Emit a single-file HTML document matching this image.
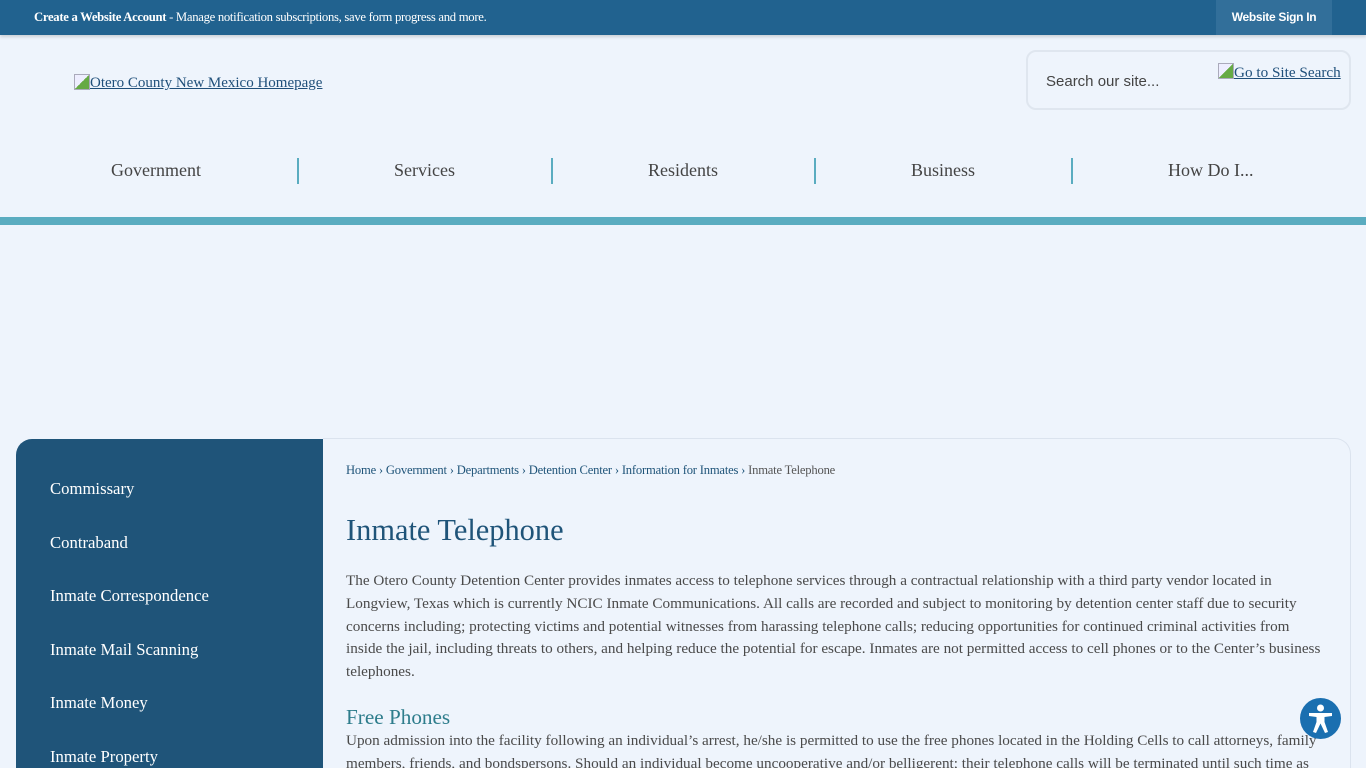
<!DOCTYPE html>
<html><head><style>
*{margin:0;padding:0;box-sizing:border-box}
html{overflow:hidden;height:768px}
body{width:1366px;height:768px;overflow:hidden;background:#eef4fc;font-family:"Liberation Serif",serif;position:relative}
.top{position:absolute;left:0;top:0;width:1366px;height:35px;background:#21628f;box-shadow:0 2px 3px rgba(0,0,0,.15)}
.top .t{position:absolute;left:34px;top:10px;font-size:12.7px;color:#fff;letter-spacing:-.3px}
.top .s{position:absolute;left:1216px;top:0;width:116px;height:35px;background:#326f9a;color:#fff;font-family:"Liberation Sans",sans-serif;font-weight:bold;font-size:12px;text-align:center;line-height:35px;letter-spacing:-.3px}
.logo{position:absolute;left:90px;top:75px;font-size:15px;color:#1f4f7a;text-decoration:underline}
.ic{position:absolute;width:16px;height:16px;border:1px solid #aab;background:linear-gradient(135deg,#eef 50%,#6a4 50%)}
.search{position:absolute;left:1026px;top:50px;width:325px;height:60px;border:2px solid #dfe6ef;border-radius:10px;background:#eef4fc}
.search .p{position:absolute;left:18px;top:21px;font-family:"Liberation Sans",sans-serif;font-size:15px;color:#444}
.search .g{position:absolute;left:206px;top:12px;font-size:15.2px;color:#1f4f7a;text-decoration:underline}
.nav{position:absolute;top:160px;font-size:18px;color:#444}
.sep{position:absolute;top:158px;width:2px;height:26px;background:#5aacc0}
.teal{position:absolute;left:0;top:217px;width:1366px;height:8px;background:#5aacc0}
.side{position:absolute;left:16px;top:439px;width:307px;height:329px;background:#1f5479;border-top-left-radius:16px;overflow:hidden}
.side div{position:absolute;left:34px;font-size:16.7px;color:#fff}
.main{position:absolute;left:323px;top:438px;width:1028px;height:340px;border:1px solid #dbe3ee;border-left:none;border-top-right-radius:16px}
.bc{position:absolute;left:346px;top:463px;font-size:12.6px;color:#1f5479;letter-spacing:-.2px}
.bc span{color:#555}
h1{position:absolute;left:346px;top:513px;font-weight:normal;font-size:30.4px;color:#1f5479}
.p1{position:absolute;left:346px;top:570px;width:978px;font-size:15.2px;line-height:22.8px;color:#4a4a4a}
h2{position:absolute;left:346px;top:705px;font-weight:normal;font-size:21.2px;color:#2e7d8c}
.p2{position:absolute;left:346px;top:730px;width:985px;font-size:15.2px;line-height:22.8px;color:#4a4a4a}
.acc{position:absolute;left:1300px;top:698px;width:41px;height:41px;border-radius:50%;background:#1a6fb0}
</style></head><body>
<div class="top"><div class="t"><b>Create a Website Account</b> - Manage notification subscriptions, save form progress and more.</div><div class="s">Website Sign In</div></div>
<div class="ic" style="left:74px;top:74px"></div>
<div class="logo">Otero County New Mexico Homepage</div>
<div class="search"><div class="p">Search our site...</div><div class="ic" style="left:190px;top:11px"></div><div class="g">Go to Site Search</div></div>
<div class="nav" style="left:111px">Government</div>
<div class="sep" style="left:297px"></div>
<div class="nav" style="left:394px">Services</div>
<div class="sep" style="left:551px"></div>
<div class="nav" style="left:648px">Residents</div>
<div class="sep" style="left:814px"></div>
<div class="nav" style="left:911px">Business</div>
<div class="sep" style="left:1071px"></div>
<div class="nav" style="left:1168px">How Do I...</div>
<div class="teal"></div>
<div class="side">
<div style="top:40px">Commissary</div>
<div style="top:94px">Contraband</div>
<div style="top:147px">Inmate Correspondence</div>
<div style="top:201px">Inmate Mail Scanning</div>
<div style="top:254px">Inmate Money</div>
<div style="top:308px">Inmate Property</div>
</div>
<div class="main"></div>
<div class="bc">Home › Government › Departments › Detention Center › Information for Inmates › <span>Inmate Telephone</span></div>
<h1>Inmate Telephone</h1>
<div class="p1">The Otero County Detention Center provides inmates access to telephone services through a contractual relationship with a third party vendor located in Longview, Texas which is currently NCIC Inmate Communications. All calls are recorded and subject to monitoring by detention center staff due to security concerns including; protecting victims and potential witnesses from harassing telephone calls; reducing opportunities for continued criminal activities from inside the jail, including threats to others, and helping reduce the potential for escape. Inmates are not permitted access to cell phones or to the Center’s business telephones.</div>
<h2>Free Phones</h2>
<div class="p2">Upon admission into the facility following an individual’s arrest, he/she is permitted to use the free phones located in the Holding Cells to call attorneys, family members, friends, and bondspersons. Should an individual become uncooperative and/or belligerent; their telephone calls will be terminated until such time as</div>
<div class="acc"><svg width="41" height="41" viewBox="0 0 41 41"><circle cx="20.5" cy="10" r="3.5" fill="#fff"/><path d="M9 15 L32 15 L32 18 L24.5 19 L24.5 24 L28 34 L25 35 L20.5 25.5 L16 35 L13 34 L16.5 24 L16.5 19 L9 18Z" fill="#fff"/></svg></div>
</body></html>
